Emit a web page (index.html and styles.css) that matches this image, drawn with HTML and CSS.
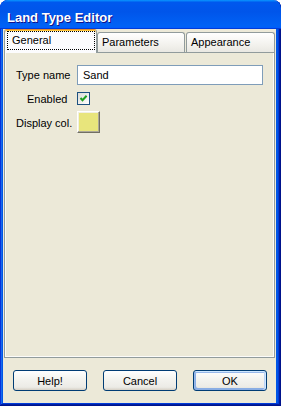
FILE: index.html
```html
<!DOCTYPE html>
<html>
<head>
<meta charset="utf-8">
<link rel="stylesheet" href="styles.css">
</head>
<body>
<div class="window">
  <div class="titlebar"><span class="title">Land Type Editor</span></div>
  <div class="client">
    <div class="tabs">
      <div class="tab active"><span class="focus">General</span></div>
      <div class="tab t-params">Parameters</div>
      <div class="tab t-appear">Appearance</div>
    </div>
    <div class="panel">
      <div class="form">
        <label class="lbl">Type name</label>
        <input class="textbox" type="text" value="Sand">
        <label class="lbl lbl-enabled">Enabled</label>
        <span class="check"><svg width="11" height="11" viewBox="0 0 11 11"><path d="M2.5 5 L4.5 7.2 L8.6 2.8" fill="none" stroke="#21a121" stroke-width="2"/></svg></span>
        <label class="lbl">Display col.</label>
        <span class="swatch"></span>
      </div>
    </div>
    <div class="buttons">
      <button class="btn">Help!</button>
      <button class="btn">Cancel</button>
      <button class="btn default">OK</button>
    </div>
  </div>
</div>
</body>
</html>
```
FILE: styles.css
```css
html, body {
  margin: 0;
  padding: 0;
  background: #ffffff;
}
.window {
  width: 281px;
  height: 406px;
  box-sizing: border-box;
  border-radius: 8px 8px 0 0;
  background: #0055e5;
  box-shadow: inset -1px -1px #00138c, inset 1px 0 #0831d9, inset -2px -2px #001ea0, inset 2px 0 #166aee, inset -3px -3px #003bda;
  display: flex;
  flex-direction: column;
  font-family: "Liberation Sans", Arial, sans-serif;
  font-size: 11px;
  color: #000;
  overflow: hidden;
}
.titlebar {
  height: 29px;
  box-sizing: border-box;
  flex: none;
  border-radius: 8px 8px 0 0;
  background: linear-gradient(180deg, #0997ff, #0058ee 8%, #0055ea 40%, #0062f5 88%, #0062f5 93%, #005bff 95%, #003dd7 96%, #003dd7);
  padding: 5px 0 0 7px;
  display: flex;
  align-items: center;
}
.title {
  color: #fff;
  font-weight: bold;
  font-size: 13px;
  text-shadow: 1px 1px #0f1089;
}
.client {
  flex: 1;
  margin: 0 5px 3px 3px;
  background: #ece9d8;
  display: flex;
  flex-direction: column;
}
.tabs {
  display: flex;
  align-items: flex-end;
  padding-left: 1px;
  height: 23px;
  position: relative;
  z-index: 1;
}
.tab {
  box-sizing: border-box;
  height: 20px;
  border: 1px solid #919b9c;
  border-bottom: none;
  border-radius: 3px 3px 0 0;
  background: linear-gradient(180deg, #ffffff, #f3f2ee 60%, #e9e8e2);
  padding: 3px 0 0 4px;
  white-space: nowrap;
}
.tab.active {
  width: 93px;
  height: 24px;
  margin-bottom: -1px;
  border-top: 1px solid #e68b2c;
  box-shadow: inset 0 1px #ffc73c;
  background: #fcfcfe;
  padding: 1px 1px 3px 2px;
  display: flex;
}
.focus {
  flex: 1;
  border: 1px dotted #000;
  padding: 2px 0 0 4px;
}
.t-params {
  width: 88px;
}
.t-appear {
  width: 89px;
  margin-left: 1px;
}
.panel {
  box-sizing: border-box;
  height: 306px;
  margin: 0 1px 0 1px;
  border: 1px solid #919b9c;
  box-shadow: inset -1px -1px #fbfbf9, inset 1px 0 #fbfbf9;
  background: #ece9d8;
  padding: 12px 0 0 11px;
}
.form {
  display: grid;
  grid-template-columns: 61px 186px;
  grid-template-rows: 20px 21px 22px;
  row-gap: 3px;
  align-items: center;
}
.form > :nth-child(5) {
  margin-top: -1px;
}
.lbl {
  white-space: nowrap;
}
.lbl-enabled {
  padding-left: 11px;
}
.textbox {
  box-sizing: border-box;
  width: 186px;
  height: 20px;
  border: 1px solid #7f9db9;
  background: #fff;
  font-family: inherit;
  font-size: 11px;
  padding: 0 0 0 5px;
  margin: 0;
  outline: none;
  color: #000;
}
.check {
  box-sizing: border-box;
  width: 13px;
  height: 13px;
  border: 1px solid #1c5180;
  background: linear-gradient(135deg, #dcdcd7, #ffffff);
  display: flex;
  align-items: center;
  justify-content: center;
}
.check svg {
  display: block;
}
.swatch {
  box-sizing: border-box;
  width: 23px;
  height: 22px;
  background: #e8e57c;
  border: 1px solid;
  border-color: #ffffff #716f64 #716f64 #ffffff;
  box-shadow: inset -1px -1px #aca899, inset 1px 1px #f1efe2;
  margin-top: -2px;
}
.buttons {
  display: flex;
  gap: 16px;
  padding: 12px 0 0 10px;
}
.btn {
  box-sizing: border-box;
  width: 74px;
  height: 21px;
  border: 1px solid #003c74;
  border-radius: 3px;
  background: linear-gradient(180deg, #ffffff, #f4f4f0 40%, #ecebe6 85%, #d6d0c5);
  font-family: inherit;
  font-size: 11px;
  color: #000;
  padding: 0;
  margin: 0;
}
.btn.default {
  box-shadow: inset -1px 1px #cee7ff, inset 1px 2px #98b8ea, inset -2px 0 #bcd4f6, inset 1px -1px #89ade4, inset 2px -2px #89ade4;
}
```
